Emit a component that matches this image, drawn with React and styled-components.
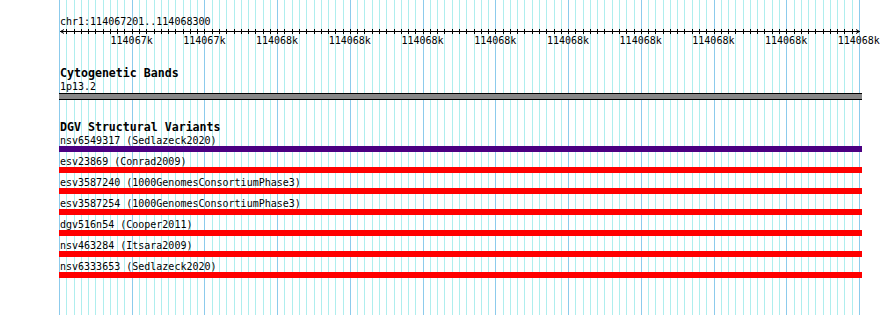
import React from 'react';
import styled, { createGlobalStyle } from 'styled-components';

const GlobalStyle = createGlobalStyle`
  html, body { margin: 0; padding: 0; background: #fff; }
  body {
    font-family: "DejaVu Sans Mono", "Liberation Mono", monospace;
    color: #000;
  }
`;

const TRACK_LEFT = 59;
const GRID_WIDTH = 800;
const MINOR_COUNT = 110;
const STEP = GRID_WIDTH / MINOR_COUNT;
const TRACK_WIDTH = 803;

const View = styled.div`
  position: relative;
  width: 890px;
  height: 315px;
  overflow: hidden;
  background: #fff;
`;

const GridLayer = styled.svg`
  position: absolute;
  top: 0;
  left: ${TRACK_LEFT}px;
  width: ${GRID_WIDTH + 2}px;
  height: 315px;
  shape-rendering: crispEdges;
`;

const Tracks = styled.div`
  position: relative;
  display: flex;
  flex-direction: column;
  width: ${TRACK_WIDTH}px;
  margin-left: ${TRACK_LEFT}px;
  padding-top: 16px;
`;

const RulerTitle = styled.div`
  font-size: 10px;
  line-height: 12px;
  height: 12px;
  padding-left: 1px;
  white-space: nowrap;
`;

const Axis = styled.svg`
  display: block;
  width: ${TRACK_WIDTH}px;
  height: 7px;
  shape-rendering: crispEdges;
`;

const ScaleRow = styled.div`
  display: grid;
  grid-template-columns: repeat(11, ${STEP * 10}px);
  height: 12px;
  font-size: 10px;
  line-height: 12px;
`;

const ScaleCell = styled.div`
  display: flex;
  justify-content: flex-end;
`;

const ScaleText = styled.span`
  margin-right: -21px;
  white-space: nowrap;
`;

const TrackHeader = styled.div`
  margin-top: ${(p) => p.$gap}px;
  margin-bottom: 1px;
  padding-left: 1px;
  font-size: 11.6px;
  font-weight: bold;
  line-height: 13px;
  height: 13px;
  white-space: nowrap;
`;

const Feature = styled.div`
  display: flex;
  flex-direction: column;
  margin-bottom: ${(p) => p.$after}px;
`;

const FeatureLabel = styled.div`
  font-size: 10px;
  line-height: 11px;
  height: 11px;
  padding-left: 1px;
  margin-bottom: ${(p) => p.$pad || 0}px;
  white-space: pre;
`;

const Bar = styled.div`
  height: 6px;
  width: 100%;
  background: ${(p) => p.$color};
`;

const BandBar = styled.div`
  height: 5px;
  width: 100%;
  background: #888888;
  border-top: 1px solid #000;
  border-bottom: 1px solid #000;
`;

const gridLines = Array.from({ length: MINOR_COUNT + 1 }, (_, k) => ({
  x: Math.round(k * STEP) + 0.5,
  major: k % 10 === 0,
}));

const scaleLabels = [
  '114067k', '114067k', '114068k', '114068k', '114068k', '114068k',
  '114068k', '114068k', '114068k', '114068k', '114068k',
];

const variants = [
  { label: 'nsv6549317 (Sedlazeck2020)', color: '#4b0082' },
  { label: 'esv23869 (Conrad2009)', color: '#ff0000' },
  { label: 'esv3587240 (1000GenomesConsortiumPhase3)', color: '#ff0000' },
  { label: 'esv3587254 (1000GenomesConsortiumPhase3)', color: '#ff0000' },
  { label: 'dgv516n54 (Cooper2011)', color: '#ff0000' },
  { label: 'nsv463284 (Itsara2009)', color: '#ff0000' },
  { label: 'nsv6333653 (Sedlazeck2020)', color: '#ff0000' },
];

function Grid() {
  return (
    <GridLayer viewBox={`0 0 ${GRID_WIDTH + 2} 315`}>
      {gridLines.map((l, i) => (
        <line
          key={i}
          x1={l.x}
          x2={l.x}
          y1={0}
          y2={315}
          stroke={l.major ? '#8ccbec' : '#afeeee'}
          strokeWidth={1}
        />
      ))}
    </GridLayer>
  );
}

function RulerAxis() {
  const ticks = gridLines.slice(1, -1);
  return (
    <Axis viewBox={`0 0 ${TRACK_WIDTH} 7`}>
      <line x1={1} x2={801} y1={3.5} y2={3.5} stroke="#000" />
      {ticks.map((t, i) => (
        <line key={i} x1={t.x} x2={t.x} y1={1} y2={6} stroke="#000" />
      ))}
      <polyline points="5,1.5 1.5,3.5 5,5.5" fill="none" stroke="#000" shapeRendering="auto" />
      <polyline points="797,1.5 800.5,3.5 797,5.5" fill="none" stroke="#000" shapeRendering="auto" />
    </Axis>
  );
}

export default function App() {
  return (
    <>
      <GlobalStyle />
      <View>
        <Grid />
        <Tracks>
          <RulerTitle>chr1:114067201..114068300</RulerTitle>
          <RulerAxis />
          <ScaleRow>
            {scaleLabels.map((s, i) => (
              <ScaleCell key={i}>
                <ScaleText>{s}</ScaleText>
              </ScaleCell>
            ))}
          </ScaleRow>

          <TrackHeader $gap={20}>Cytogenetic Bands</TrackHeader>
          <Feature $after={0}>
            <FeatureLabel $pad={1}>1p13.2</FeatureLabel>
            <BandBar />
          </Feature>

          <TrackHeader $gap={21}>DGV Structural Variants</TrackHeader>
          {variants.map((v, i) => (
            <Feature key={i} $after={4}>
              <FeatureLabel>{v.label}</FeatureLabel>
              <Bar $color={v.color} />
            </Feature>
          ))}
        </Tracks>
      </View>
    </>
  );
}
